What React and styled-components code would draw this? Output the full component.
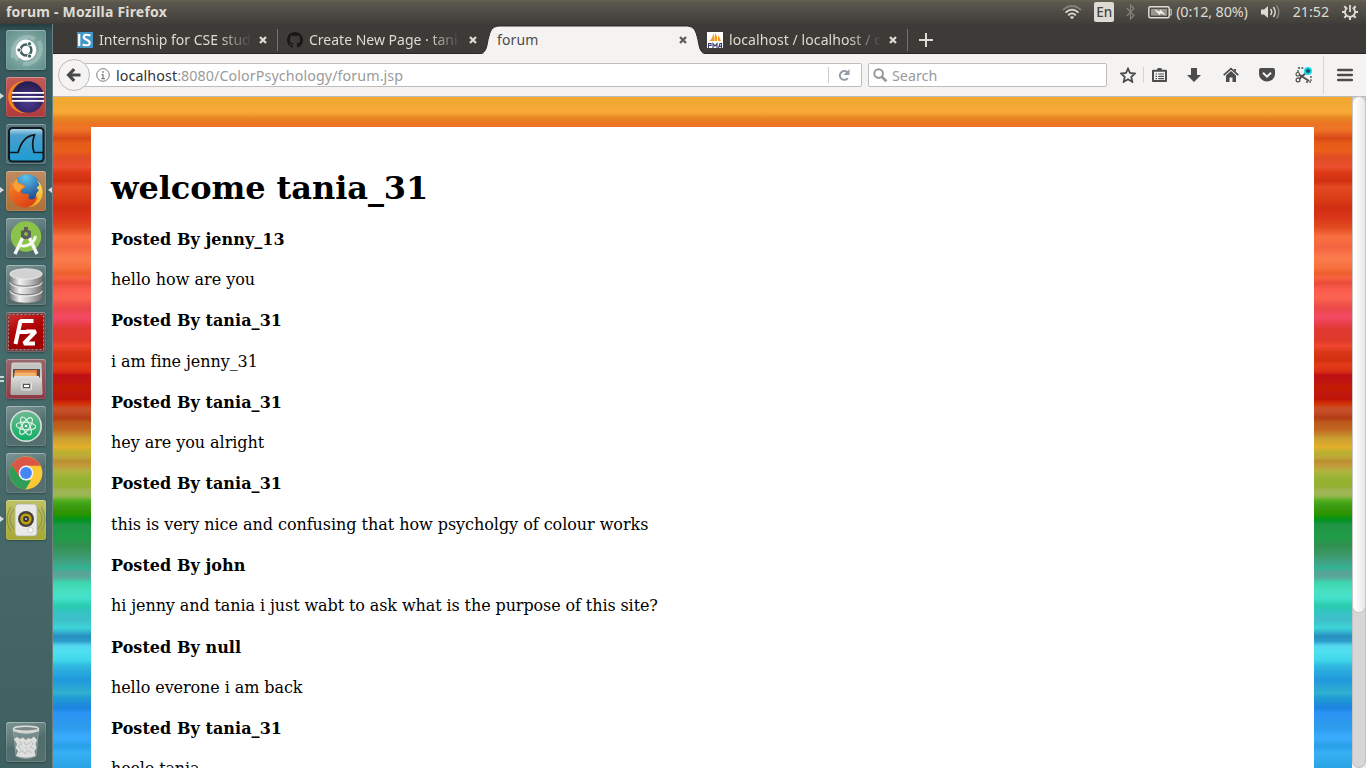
import React from 'react';
import styled, { createGlobalStyle } from 'styled-components';

const GlobalStyle = createGlobalStyle`
  * { box-sizing: border-box; }
  html, body { margin: 0; padding: 0; }
  body { width: 1366px; height: 768px; overflow: hidden; background: #3c3b37; }
  svg { display: block; flex: none; }
`;

const stripes = [
  [97, '#f0a830'], [104, '#f0a830'], [111, '#faaa38'], [114, '#f4a030'], [118, '#e58520'], [124, '#ec7424'], [130, '#ee7226'],
  [138, '#d84816'], [143, '#e45a18'], [150, '#ea6019'], [158, '#e04c24'], [167, '#ec5030'], [172, '#de3c18'],
  [181, '#d03010'], [187, '#e44822'], [197, '#dc4018'], [207, '#d02e12'], [217, '#da351a'], [227, '#e24a20'],
  [237, '#f87040'], [247, '#f46440'], [258, '#fa7c4c'], [268, '#f87040'], [273, '#ec602c'], [278, '#f86040'],
  [283, '#e84c38'], [289, '#fb5a4c'], [298, '#fb6450'], [308, '#ea4848'], [317, '#f44a64'], [323, '#ea4050'],
  [329, '#e03830'], [341, '#e03a2c'], [346, '#f04830'], [352, '#da3818'], [360, '#d23012'], [365, '#e23c18'],
  [372, '#da2c14'], [375, '#bc1014'], [382, '#c01410'], [388, '#c41c00'], [393, '#c01810'], [399, '#c01408'],
  [404, '#d43408'], [408, '#c85028'], [412, '#c44c28'], [418, '#b43c14'], [423, '#bc5c1c'], [429, '#c06420'],
  [438, '#c89c30'], [447, '#e4b02c'], [453, '#b8b030'], [457, '#c0a838'], [461, '#b89030'], [466, '#c49c3c'],
  [471, '#b0b440'], [480, '#94b430'], [486, '#94b030'], [491, '#a0b458'], [496, '#98b850'], [501, '#4cac1c'],
  [506, '#3c9c14'], [514, '#2c9400'], [520, '#009420'], [525, '#209444'], [538, '#209c48'], [545, '#309050'],
  [555, '#3c9868'], [563, '#40a488'], [568, '#30b490'], [572, '#58a498'], [577, '#58a898'], [583, '#3cd8b0'],
  [591, '#48e0c0'], [598, '#44e0cc'], [606, '#28ccac'], [611, '#34c4c0'], [620, '#40c0cc'], [628, '#3cd4d8'],
  [636, '#2890c0'], [641, '#2c9cc8'], [646, '#54d8f0'], [651, '#50e0f0'], [660, '#40d8ec'], [666, '#30b8e0'],
  [680, '#2098dc'], [693, '#30b0d0'], [698, '#209cd4'], [708, '#1c84e0'], [713, '#2c94f4'], [728, '#2c9cec'],
  [738, '#3cacff'], [746, '#28a0e8'], [753, '#38b0f4'], [768, '#28a4e4'],
];
const stripeCss = stripes.map(([y, c]) => `${c} ${y - 97}px`).join(', ');

const Screen = styled.div`
  width: 1366px;
  height: 768px;
  display: flex;
  flex-direction: column;
  overflow: hidden;
  font-family: 'Noto Sans', 'Open Sans', sans-serif;
  font-size: 14px;
  line-height: 20px;
`;

const Text = styled.span`
  white-space: pre;
  letter-spacing: ${(p) => p.$track || 0}px;
  font-size: ${(p) => p.$size || 14}px;
  font-weight: ${(p) => p.$weight || 400};
  color: ${(p) => p.$color || 'inherit'};
`;

const TopPanel = styled.header`
  flex: none;
  height: 24px;
  padding: 0 8px 0 6px;
  display: flex;
  align-items: center;
  justify-content: space-between;
  color: #dfdbd2;
  background: linear-gradient(#66634f 0, #5b584f 2px, #504e47 10px, #403f3a 23px, #3c3b37 24px);
`;

const Indicators = styled.div`
  display: flex;
  align-items: center;
  height: 24px;
`;

const Indicator = styled.div`
  display: flex;
  align-items: center;
  margin-left: ${(p) => p.$gap || 0}px;
`;

const LangBadge = styled.div`
  width: 20px;
  height: 20px;
  margin-left: 12px;
  border-radius: 2px;
  background: #dfdbd2;
  color: #454440;
  text-align: center;
  line-height: 20px;
`;

const Desktop = styled.div`
  flex: 1;
  min-height: 0;
  display: flex;
`;

const Launcher = styled.nav`
  flex: none;
  width: 53px;
  padding: 6px 0 6px;
  display: flex;
  flex-direction: column;
  gap: 7px;
  border-right: 1px solid #6d7f80;
  background: linear-gradient(#243c40 0, #35565b 8px, #3a5d61 100px, #466b6b 330px, #466869 520px, #3f6061 744px);
`;

const TileRow = styled.div`
  position: relative;
  height: 40px;
  padding-left: 6px;
  margin-top: ${(p) => (p.$last ? 'auto' : 0)};
`;

const Tile = styled.div`
  width: 40px;
  height: 40px;
  border-radius: 3px;
  background: ${(p) => p.$bg};
  box-shadow: inset 0 0 0 1px rgba(255, 255, 255, 0.13), inset 0 1px 0 rgba(255, 255, 255, 0.25), 0 1px 2px rgba(0, 0, 0, 0.3);
`;

const RunningMark = styled.i`
  position: absolute;
  top: 16px;
  border: 4px solid transparent;
  border-width: 3.5px 4px;
  ${(p) => (p.$side === 'right' ? 'right: 0; border-right-color: #d6dadb; border-left-width: 0;' : 'left: 0; border-left-color: #d6dadb; border-right-width: 0;')}
`;

const DoubleMark = styled.i`
  position: absolute;
  left: 0;
  top: 17px;
  width: 4px;
  height: 6px;
  border: solid #d0d4d5;
  border-width: 2px 0;
`;

const Browser = styled.main`
  flex: 1;
  min-width: 0;
  display: flex;
  flex-direction: column;
`;

const TabStrip = styled.div`
  flex: none;
  height: 30px;
  padding-left: 15px;
  display: flex;
  background: linear-gradient(#3c3b37 0 29px, #282724 29px);
`;

const Tab = styled.div`
  position: relative;
  width: 210px;
  height: 30px;
  padding: 2px 11px 0 9px;
  display: flex;
  align-items: center;
  gap: 6px;
  color: ${(p) => (p.$active ? '#4c4c4c' : '#dfdbd2')};
`;

const TabShape = styled.svg`
  position: absolute;
  left: -11px;
  top: 0;
`;

const TabLabel = styled.div`
  position: relative;
  flex: 1;
  min-width: 0;
  height: 20px;
  margin-right: ${(p) => (p.$fade ? 1 : 2)}px;
  ${(p) => p.$fade && 'mask-image: linear-gradient(90deg, #000 78%, transparent);'}
`;

const TabDivider = styled.i`
  width: 1px;
  height: 22px;
  margin: 5px 0 0 -1px;
  background: #74736d;
`;

const NewTab = styled.div`
  padding: 9px 0 0 11px;
`;

const Toolbar = styled.div`
  flex: none;
  height: 43px;
  display: flex;
  align-items: center;
  padding-left: 5px;
  background: #f4f3f2;
  border-bottom: 1px solid #bcbab8;
`;

const BackButton = styled.div`
  position: relative;
  z-index: 1;
  width: 32px;
  height: 32px;
  border-radius: 50%;
  border: 1px solid #bdbbb9;
  background: #f5f4f3;
  display: flex;
  align-items: center;
  justify-content: center;
`;

const Field = styled.div`
  height: 24px;
  width: ${(p) => p.$w}px;
  margin-left: ${(p) => p.$ml}px;
  padding-left: ${(p) => p.$pl}px;
  display: flex;
  align-items: center;
  background: #fff;
  border: 1px solid #bfbdbb;
  border-radius: 2px;
  color: #9a9a9a;
`;

const FieldText = styled.div`
  margin-left: ${(p) => p.$gap}px;
  padding-top: 2px;
  height: 22px;
`;

const Reload = styled.div`
  margin-left: auto;
  width: 33px;
  height: 16px;
  padding-left: 9px;
  border-left: 1px solid #cfcdcb;
`;

const Tools = styled.div`
  display: flex;
  align-items: center;
  margin-left: 13px;
`;

const ToolIcon = styled.div`
  width: ${(p) => p.$w || 36}px;
  height: ${(p) => p.$h || 16}px;
  display: flex;
  align-items: center;
  border-right: 1px solid ${(p) => (p.$rule ? '#d6d4d2' : 'transparent')};
`;

const Viewport = styled.div`
  flex: 1;
  min-height: 0;
  display: flex;
`;

const Page = styled.section`
  flex: 1;
  padding: 30px 38px 0;
  overflow: hidden;
  background: linear-gradient(${stripeCss});
`;

const Forum = styled.article`
  height: 900px;
  padding: 42px 20px 0;
  background: #fff;
  color: #000;
  font-family: 'DejaVu Serif', serif;
  font-size: 16px;
`;

const Welcome = styled.h1`
  margin: 0 0 22.8px;
  font-size: 32px;
  line-height: 38px;
  letter-spacing: -0.08px;
`;

const Author = styled.h4`
  margin: 0 0 21.3px;
  font-size: 16px;
  line-height: 19px;
  letter-spacing: 0.05px;
`;

const Message = styled.p`
  margin: 0 0 21.25px;
  line-height: 20px;
  letter-spacing: ${(p) => p.$track}px;
`;

const ScrollTrack = styled.div`
  flex: none;
  width: 14px;
  background: #d6d6d6;
  border: solid #c4c2c0;
  border-width: 0 1px 1px;
  border-radius: 0 0 7px 7px;
  box-shadow: 0 8px 0 #f2f1f0;
`;

const ScrollThumb = styled.div`
  height: 515px;
  border-radius: 7px;
  background: linear-gradient(90deg, #fdfdfd 20%, #e9e8e7);
  box-shadow: 0 0 0 1px #c8c6c4;
`;

const CloseMark = styled.svg`
  position: relative;
`;

const Close = ({ color }) => (
  <CloseMark width="8" height="8" viewBox="0 0 8 8">
    <path d="M1 1L7 7M7 1L1 7" stroke={color} strokeWidth="2.3" />
  </CloseMark>
);

const UbuntuIcon = () => (
  <svg width="40" height="40">
    <path d="M7 28C5 12 17 3 29 9M33 11C39 24 29 35 17 34M12 30C4 19 10 8 22 7" fill="none" stroke="#c8dedb" strokeOpacity=".35" strokeWidth="4" />
    <circle cx="20" cy="20" r="10.4" fill="#fff" />
    <circle cx="20" cy="20" r="5.4" fill="none" stroke="#42635d" strokeWidth="2.5" />
    <g fill="#42635d" stroke="#fff" strokeWidth=".9">
      <circle cx="13" cy="20" r="2.1" /><circle cx="23.5" cy="13.9" r="2.1" /><circle cx="23.5" cy="26.1" r="2.1" />
    </g>
  </svg>
);

const EclipseIcon = () => (
  <svg width="40" height="40">
    <defs>
      <radialGradient id="ecl" cx=".5" cy=".65" r=".6"><stop offset="0" stopColor="#4c3a94" /><stop offset="1" stopColor="#271e50" /></radialGradient>
    </defs>
    <circle cx="18.2" cy="20" r="16" fill="#f78a18" />
    <circle cx="21" cy="20" r="15.9" fill="#c8503c" />
    <circle cx="22" cy="20" r="15.8" fill="url(#ecl)" />
    <path d="M6 15.8h32M6 19.8h32M6 23.8h32" stroke="#fff" strokeWidth="1.8" />
  </svg>
);

const WiresharkIcon = () => (
  <svg width="40" height="40">
    <defs><linearGradient id="ws" x2="0" y2="1"><stop offset="0" stopColor="#b8dcec" /><stop offset=".22" stopColor="#4a9fcc" /><stop offset="1" stopColor="#1c9bd4" /></linearGradient></defs>
    <rect x="3" y="4" width="34.5" height="33.5" rx="3.5" fill="url(#ws)" stroke="#14191c" strokeWidth="2" />
    <path d="M3 28.5H12C15 18 20 11.5 28.5 10.8C26.2 17 26.2 23 28 28.5H37" fill="none" stroke="#10171a" strokeWidth="1.7" />
  </svg>
);

const FirefoxIcon = () => (
  <svg width="40" height="40">
    <defs>
      <radialGradient id="ffb" cx=".45" cy=".1" r=".9"><stop offset="0" stopColor="#5cc4ea" /><stop offset="1" stopColor="#153a8c" /></radialGradient>
      <linearGradient id="ffo" x2=".6" y2="1"><stop offset="0" stopColor="#f7962a" /><stop offset=".5" stopColor="#ec641e" /><stop offset="1" stopColor="#dc4416" /></linearGradient>
      <linearGradient id="ffy" x2="0" y2="1"><stop offset="0" stopColor="#fbe96a" /><stop offset="1" stopColor="#f6a01c" /></linearGradient>
    </defs>
    <circle cx="21" cy="17.5" r="14.2" fill="url(#ffb)" />
    <path d="M31 9C37 14 38.5 24 34 30C31 34 27 36 22 36C27 32 30 28 30.5 22L33 19L30.5 17L33.5 14Z" fill="url(#ffy)" />
    <path d="M5 10L7 13L10.5 7.5L12 12C15 11.5 17 13 19.5 16L15 19C14.5 22 17 23.5 20 22.6L23.5 24C20 28 26 31 31.5 25C30.5 32 25 36.8 18.5 36.4C8 35.8 1.5 26 4.2 17Z" fill="url(#ffo)" />
    <path d="M7 13L10.5 7.5L12 12L19 15.5L14.5 18.5L13 21.5L8 18Z" fill="#f7a136" />
  </svg>
);

const AndroidStudioIcon = () => (
  <svg width="40" height="40">
    <circle cx="20" cy="18.5" r="15.2" fill="#8bc34a" />
    <path d="M12 26.5C18 30 28 27 29.5 18" fill="none" stroke="#f4f6f2" strokeWidth="3" />
    <path d="M17.5 18L9 36M22.5 18L31 36" stroke="#f5f5f5" strokeWidth="3.4" />
    <path d="M18 9h4v3l3 1v6l-3 2h-4l-3-2v-6l3-1z" fill="#5b5b5e" />
    <circle cx="20" cy="16" r="1.9" fill="#8bbd4a" />
  </svg>
);

const DatabaseIcon = () => (
  <svg width="40" height="40">
    <defs><linearGradient id="db"><stop offset="0" stopColor="#777" /><stop offset=".3" stopColor="#f2f2f2" /><stop offset=".6" stopColor="#c4c4c4" /><stop offset="1" stopColor="#707070" /></linearGradient></defs>
    {[26, 17.5, 9].map((y) => (
      <g key={y}>
        <path d={`M3.8 ${y}v6.5c0 7.5 32.4 7.5 32.4 0V${y}z`} fill="url(#db)" />
        <path d={`M3.8 ${y + 6.5}c0 7.5 32.4 7.5 32.4 0`} fill="none" stroke="#666" strokeWidth=".8" />
        <ellipse cx="20" cy={y} rx="16.2" ry="5.2" fill="#d2d2d2" stroke="#f0f0f0" strokeWidth=".8" />
      </g>
    ))}
  </svg>
);

const FileZillaIcon = () => (
  <svg width="40" height="40">
    <defs><linearGradient id="fz" x2=".4" y2="1"><stop offset="0" stopColor="#cf3030" /><stop offset=".5" stopColor="#b00505" /><stop offset="1" stopColor="#9c0000" /></linearGradient></defs>
    <rect x="2.5" y="2.5" width="35" height="35" fill="url(#fz)" stroke="#6b3438" />
    <rect x="2.5" y="2.5" width="35" height="35" fill="none" stroke="#b98a8c" strokeDasharray="2 2" />
    <path d="M9.5 32L14.5 9H27.5M12 20H22M20 19.5H29.5L18 31.5H29" fill="none" stroke="#fff" strokeWidth="4" strokeLinejoin="bevel" />
  </svg>
);

const FilesIcon = () => (
  <svg width="40" height="40">
    <defs><linearGradient id="fi" x2="0" y2="1"><stop offset="0" stopColor="#dededc" /><stop offset="1" stopColor="#a8a8a4" /></linearGradient></defs>
    <path d="M6 5Q6 4 7 4H34Q35 4 35 5L36 35H5Z" fill="#c4c4c2" stroke="#e4e4e4" strokeWidth=".8" />
    <rect x="7" y="10" width="27" height="9" fill="#55504b" />
    <path d="M9 11H31V18H8Z" fill="#e2803d" /><path d="M9 13.5H29L31 18H8Z" fill="#f0b46c" />
    <path d="M5 18.5H8V17H33V18.5H36V36H5Z" fill="url(#fi)" />
    <rect x="15.5" y="23" width="10" height="8" rx="1" fill="#bdbdbb" stroke="#e6e6e6" />
    <rect x="17.5" y="25.5" width="6" height="3" fill="#fff" stroke="#555" />
  </svg>
);

const AtomIcon = () => (
  <svg width="40" height="40">
    <defs><linearGradient id="at" x2="0" y2="1"><stop offset="0" stopColor="#6cba91" /><stop offset="1" stopColor="#0fae62" /></linearGradient></defs>
    <circle cx="20" cy="20" r="15.2" fill="url(#at)" stroke="#d5ddd9" strokeWidth="1.7" />
    <g fill="none" stroke="#e6f2ec" strokeWidth="1.1">
      <ellipse cx="20" cy="20" rx="9.8" ry="3.8" transform="rotate(5 20 20)" />
      <ellipse cx="20" cy="20" rx="9.8" ry="3.8" transform="rotate(65 20 20)" />
      <ellipse cx="20" cy="20" rx="9.8" ry="3.8" transform="rotate(125 20 20)" />
    </g>
    <circle cx="20" cy="20" r="1.3" fill="#fff" />
  </svg>
);

const ChromeIcon = () => (
  <svg width="40" height="40">
    <circle cx="20" cy="20" r="16.4" fill="#fcc934" />
    <path d="M5.8 11.8L13.7 23.6L20 27.3H25L19.5 36.4A16.4 16.4 0 0 1 5.8 11.8Z" fill="#2f9d58" />
    <path d="M5.8 11.8A16.4 16.4 0 0 1 34.6 12.7H20L12.7 23Z" fill="#dc5645" />
    <circle cx="20" cy="20" r="7.4" fill="#f3f3f3" /><circle cx="20" cy="20" r="5.9" fill="#4486f4" />
  </svg>
);

const SpeakerIcon = () => (
  <svg width="40" height="40">
    <g fill="none" stroke="#7b8a55" strokeOpacity=".7" strokeWidth="1.2">
      <path d="M8 9Q0 19 8 29M32 9Q40 19 32 29M5 7Q-3 19 5 31M35 7Q43 19 35 31" />
    </g>
    <path d="M13 4H27Q31 4 31 9V32Q31 36 28 36H12Q9 36 9 32V9Q9 4 13 4Z" fill="#e9e9e7" stroke="#aaa" strokeWidth=".7" />
    <circle cx="20" cy="19" r="8" fill="#454440" /><circle cx="20" cy="19" r="5.6" fill="#c5a20b" />
    <circle cx="20" cy="19" r="3" fill="#35383a" /><circle cx="20" cy="19" r="1" fill="#ccc" />
    <circle cx="24.5" cy="30" r="2.6" fill="#f8f8f8" stroke="#c2c2c2" strokeWidth=".8" />
  </svg>
);

const TrashIcon = () => (
  <svg width="40" height="40">
    <path d="M7.5 9L10 34Q20 39 30 34L32.5 9Z" fill="#8fa0a0" fillOpacity=".5" stroke="#a8b4b4" strokeWidth=".6" />
    <path d="M8 17L11 15L14 17L17 15.5L20 18L22 16L25 17L28 14.5L31 18L29.5 22L30.5 26L28.5 29L29.5 34Q20 37.5 10 34L12 29L9.5 26L11 22Z" fill="#dededc" />
    <path d="M13 19l3 3-4 2 3 3M18 20l2 3 4-2M25 19l2 3-3 3 4 2M13 31l3-3 3 4 3-4 4 3M19 25l2 2" fill="none" stroke="#b4b8b7" strokeWidth=".9" />
    <ellipse cx="20" cy="6.8" rx="12.6" ry="2.6" fill="#7c8886" stroke="#dededc" strokeWidth="1.6" />
    <path d="M7 8Q20 13.5 33 8" fill="none" stroke="#d4d4d2" strokeWidth="2" />
  </svg>
);

const glass = 'linear-gradient(160deg, #7d9595 0, #5a7576 45%, #506c6d 50%, #57706f 100%)';
const tiles = [
  { Icon: UbuntuIcon, bg: 'radial-gradient(#9bbcb8, #5c8c86)' },
  { Icon: EclipseIcon, bg: 'linear-gradient(#c45b55, #ae3a3c)', mark: true },
  { Icon: WiresharkIcon, bg: 'linear-gradient(#55737a, #4d7078)' },
  { Icon: FirefoxIcon, bg: 'linear-gradient(#bd8c60, #ae6f38)', mark: true, focused: true },
  { Icon: AndroidStudioIcon, bg: glass },
  { Icon: DatabaseIcon, bg: glass },
  { Icon: FileZillaIcon, bg: '#6b4a4e' },
  { Icon: FilesIcon, bg: 'linear-gradient(#98686c, #8d3a45)', double: true },
  { Icon: AtomIcon, bg: glass },
  { Icon: ChromeIcon, bg: glass },
  { Icon: SpeakerIcon, bg: 'linear-gradient(#bfc262, #a6a833)', mark: true },
];

const InternshalaIcon = () => (
  <svg width="16" height="16">
    <rect width="16" height="16" fill="#4496c6" />
    <path d="M2.2 2V14" stroke="#fff" strokeWidth="2.2" />
    <path d="M13.5 3.6Q7 1.5 6.7 5C6.6 8 13 7.5 12.8 11C12.5 14 8 13.5 5.6 12.5" fill="none" stroke="#fff" strokeWidth="2.1" />
  </svg>
);

const GithubIcon = () => (
  <svg width="16" height="16" viewBox="0 0 16 16">
    <path fill="#191717" d="M8 0C3.58 0 0 3.58 0 8c0 3.54 2.29 6.53 5.47 7.59.4.07.55-.17.55-.38 0-.19-.01-.82-.01-1.49-2.01.37-2.53-.49-2.69-.94-.09-.23-.48-.94-.82-1.13-.28-.15-.68-.52-.01-.53.63-.01 1.08.58 1.23.82.72 1.21 1.87.87 2.33.66.07-.52.28-.87.51-1.07-1.78-.2-3.64-.89-3.64-3.95 0-.87.31-1.59.82-2.15-.08-.2-.36-1.02.08-2.12 0 0 .67-.21 2.2.82.64-.18 1.32-.27 2-.27s1.36.09 2 .27c1.53-1.04 2.2-.82 2.2-.82.44 1.1.16 1.92.08 2.12.51.56.82 1.27.82 2.15 0 3.07-1.87 3.75-3.65 3.95.29.25.54.73.54 1.48 0 1.07-.01 1.93-.01 2.2 0 .21.15.46.55.38A8.01 8.01 0 0 0 16 8c0-4.42-3.58-8-8-8z" />
  </svg>
);

const PmaIcon = () => (
  <svg width="16" height="16">
    <rect width="16" height="16" fill="#fff" />
    <path d="M2 9Q6 7 6 1Q8 5 7 9ZM8 1Q11 5 10 9H7.5ZM11 3Q13 6 14 9H11Z" fill="#f7991c" />
    <path d="M1.5 16V11.5H4V13.5H1.5M6 16V11.5L8 14L10 11.5V16M11.5 16L13 11.5H14.5V16M12 14.4H14.5" fill="none" stroke="#383b70" strokeWidth="1.1" />
  </svg>
);

const BackArrow = () => (
  <svg width="16" height="16"><path d="M8.2 2.2L2.6 8L8.2 13.8M3 8H14.5" fill="none" stroke="#4a4a4a" strokeWidth="3.2" /></svg>
);

const InfoIcon = () => (
  <svg width="14" height="14"><circle cx="7" cy="7" r="6.3" fill="none" stroke="#7b7b7b" /><path d="M7 3v2M7 6v5M5.5 6.5H7M5.3 10.7h3.6" stroke="#777" strokeWidth="1.2" /></svg>
);

const ReloadIcon = () => (
  <svg width="12" height="14" viewBox="0 0 12 14"><path d="M9.8 11.1A4.4 4.4 0 1 1 9 5" fill="none" stroke="#909ca8" strokeWidth="2" /><path d="M11.5 2V8H5.5Z" fill="#909ca8" /></svg>
);

const SearchIcon = () => (
  <svg width="15" height="15"><circle cx="5.6" cy="5.6" r="4.3" fill="none" stroke="#979797" strokeWidth="2" /><path d="M8.7 8.7L13.4 13.3" stroke="#979797" strokeWidth="2.7" /></svg>
);

const ink = '#4c4c4c';
const StarIcon = () => (
  <svg width="16" height="16"><path d="M8 1.6L10 6L15 6.5L11.3 9.9L12.3 14.8L8 12.2L3.7 14.8L4.7 9.9L1 6.5L6 6Z" fill="none" stroke={ink} strokeWidth="1.8" /></svg>
);
const ListIcon = () => (
  <svg width="15" height="16"><path d="M1 3.8H14V14H1Z" fill="none" stroke={ink} strokeWidth="2" strokeLinejoin="round" /><path d="M4 4L6 1H9L11 4Z" fill={ink} /><path d="M3.5 7H5M6.3 7H12M3.5 9.3H5M6.3 9.3H12M3.5 11.6H5M6.3 11.6H12" stroke={ink} strokeWidth="1.2" /></svg>
);
const DownloadIcon = () => (
  <svg width="14" height="16"><path d="M4 1H10V8H14L7 15L0 8H4Z" fill={ink} /></svg>
);
const HomeIcon = () => (
  <svg width="16" height="16"><path d="M.7 8.2L8 1.6L15.3 8.2" fill="none" stroke={ink} strokeWidth="1.7" /><path d="M11 2H13V5L11 3ZM3 8.5L8 4L13 8.5V15H9.5V10.5H6.5V15H3Z" fill={ink} /></svg>
);
const PocketIcon = () => (
  <svg width="16" height="16"><path d="M0 3Q0 1 2 1H14Q16 1 16 3V7A8 7.5 0 0 1 0 7Z" fill={ink} /><path d="M4 5.8L8 9.6L12 5.8" fill="none" stroke="#f4f3f2" strokeWidth="2" /></svg>
);
const ScissorsIcon = () => (
  <svg width="17" height="16">
    <path d="M3 1H9M3 3V6M16 9V14M11 15H16" stroke={ink} strokeDasharray="2 1.3" strokeWidth="1.3" />
    <path d="M4 7.5L14 14M4 12L12 5" stroke={ink} strokeWidth="1.8" />
    <circle cx="2.8" cy="7.3" r="1.8" fill="none" stroke={ink} strokeWidth="1.2" /><circle cx="3" cy="13" r="1.9" fill="none" stroke={ink} strokeWidth="1.2" />
    <circle cx="13" cy="4" r="4" fill="#17e3f2" /><path d="M13 1.4V6.6M10.7 2.7L15.3 5.3M15.3 2.7L10.7 5.3" stroke="#125363" strokeWidth="1.3" />
  </svg>
);
const MenuIcon = () => (
  <svg width="16" height="16"><path d="M1.2 3H14.8M1.2 8H14.8M1.2 13H14.8" stroke={ink} strokeWidth="2.6" strokeLinecap="round" /></svg>
);

const WifiIcon = () => (
  <svg width="20" height="15" fill="none" strokeWidth="1.7">
    <path d="M1 5Q10 -3 19 5" stroke="#85827a" /><path d="M3.5 7.7Q10 1.5 16.5 7.7M6.2 10.3Q10 6.5 13.8 10.3" stroke="#dfdbd2" /><path d="M7.8 12L10 14.2L12.2 12Q10 10.4 7.8 12Z" fill="#dfdbd2" />
  </svg>
);
const BluetoothIcon = () => (
  <svg width="9" height="16"><path d="M.8 4L8 11.5L4.5 15V1L8 4.5L.8 12" fill="none" stroke="#85827a" strokeWidth="1.2" /></svg>
);
const BatteryIcon = () => (
  <svg width="24" height="13"><rect x=".8" y=".8" width="20.4" height="11" rx="1.5" fill="none" stroke="#dfdbd2" strokeWidth="1.5" /><rect x="3" y="3" width="16" height="6.6" fill="#99968e" /><path d="M22 3.5h1.2v5.5H22" fill="none" stroke="#dfdbd2" /><path d="M6 3.2L11.5 5.6L12.5 3.5L18 9.5L12.7 7.3L11.7 9.3Z" fill="#f2efe9" /></svg>
);
const VolumeIcon = () => (
  <svg width="20" height="16"><path d="M0 5.5H3L7 2V14L3 10.5H0Z" fill="#dfdbd2" /><g fill="none" strokeWidth="1.4"><path d="M9.5 5Q12 8 9.5 11M12.4 3Q16 8 12.4 13" stroke="#dfdbd2" /><path d="M15.6 1.3Q20 8 15.6 14.7" stroke="#89867e" /></g></svg>
);
const PowerIcon = () => (
  <svg width="16" height="16" fill="none" stroke="#dfdbd2">
    <path d="M5.3 3.7A5 5 0 1 0 10.7 3.7" strokeWidth="1.8" /><path d="M8 1V8" strokeWidth="1.8" />
    <path d="M13 8H16M0 8H3M8 13V16M11.7 11.7L13.7 13.7M2.3 13.7L4.3 11.7M2.3 2.3L4.3 4.3M13.7 2.3L11.7 4.3" strokeWidth="2" />
  </svg>
);

const posts = [
  ['jenny_13', 'hello how are you', 0],
  ['tania_31', 'i am fine jenny_31', -0.09],
  ['tania_31', 'hey are you alright', -0.05],
  ['tania_31', 'this is very nice and confusing that how psycholgy of colour works', -0.045],
  ['john', 'hi jenny and tania i just wabt to ask what is the purpose of this site?', -0.1],
  ['null', 'hello everone i am back', -0.08],
  ['tania_31', 'heelo tania', -0.15],
];

const tabs = [
  { icon: <InternshalaIcon />, label: 'Internship for CSE stud', track: 0, divider: true },
  { icon: <GithubIcon />, label: 'Create New Page · tani', track: 0 },
  { label: 'forum', active: true, track: 0.15 },
  { icon: <PmaIcon />, label: 'localhost / localhost / c', track: 0.08, divider: true },
];

export default function App() {
  return (
    <Screen>
      <GlobalStyle />
      <TopPanel>
        <Text $weight={700} $size={14} $track={0.2}>forum - Mozilla Firefox</Text>
        <Indicators>
          <Indicator><WifiIcon /></Indicator>
          <LangBadge><Text $size={13.5} $weight={500}>En</Text></LangBadge>
          <Indicator $gap={12}><BluetoothIcon /></Indicator>
          <Indicator $gap={13}><BatteryIcon /></Indicator>
          <Indicator $gap={4}><Text $size={14.4} $track={-0.15}>(0:12, 80%)</Text></Indicator>
          <Indicator $gap={13}><VolumeIcon /></Indicator>
          <Indicator $gap={12}><Text $size={14.2}>21:52</Text></Indicator>
          <Indicator $gap={13}><PowerIcon /></Indicator>
        </Indicators>
      </TopPanel>
      <Desktop>
        <Launcher>
          {tiles.map(({ Icon, bg, mark, focused, double }, i) => (
            <TileRow key={i}>
              {mark && <RunningMark />}
              {double && <DoubleMark />}
              <Tile $bg={bg}><Icon /></Tile>
              {focused && <RunningMark $side="right" />}
            </TileRow>
          ))}
          <TileRow $last><Tile $bg={glass}><TrashIcon /></Tile></TileRow>
        </Launcher>
        <Browser>
          <TabStrip>
            {tabs.map((t) => (
              <React.Fragment key={t.label}>
                <Tab $active={t.active}>
                  {t.active && (
                    <TabShape width="232" height="30">
                      <path d="M0 30C11 30 9 22 12 12C14 4 17 2 24 2H208C215 2 218 4 220 12C223 22 221 30 232 30Z" fill="#f4f3f2" stroke="#2b2a27" strokeWidth="1" />
                      <path d="M8 29H224L230 31H2Z" fill="#f4f3f2" />
                    </TabShape>
                  )}
                  {t.icon}
                  <TabLabel $fade={!t.active}><Text $track={t.track}>{t.label}</Text></TabLabel>
                  <Close color={t.active ? '#5c5c5c' : '#dfdbd2'} />
                </Tab>
                {t.divider && <TabDivider />}
              </React.Fragment>
            ))}
            <NewTab><svg width="14" height="14"><path d="M7 0V14M0 7H14" stroke="#dfdbd2" strokeWidth="2" /></svg></NewTab>
          </TabStrip>
          <Toolbar>
            <BackButton><BackArrow /></BackButton>
            <Field $w={778} $ml={-6} $pl={11}>
              <InfoIcon />
              <FieldText $gap={6}><Text $size={14.3} $track={0.08} $color="#333">localhost</Text><Text $size={14.3} $track={0.08}>:8080/ColorPsychology/forum.jsp</Text></FieldText>
              <Reload><ReloadIcon /></Reload>
            </Field>
            <Field $w={239} $ml={6} $pl={4}>
              <SearchIcon />
              <FieldText $gap={4}><Text $size={14.3}>Search</Text></FieldText>
            </Field>
            <Tools>
              <ToolIcon $w={24} $rule><StarIcon /></ToolIcon>
              <ToolIcon $w={43}><Indicator $gap={8}><ListIcon /></Indicator></ToolIcon>
              <ToolIcon><DownloadIcon /></ToolIcon>
              <ToolIcon><HomeIcon /></ToolIcon>
              <ToolIcon><PocketIcon /></ToolIcon>
              <ToolIcon $w={29} $h={38} $rule><ScissorsIcon /></ToolIcon>
              <Indicator $gap={13}><MenuIcon /></Indicator>
            </Tools>
          </Toolbar>
          <Viewport>
            <Page>
              <Forum>
                <Welcome>welcome tania_31</Welcome>
                {posts.map(([who, text, track], i) => (
                  <React.Fragment key={i}>
                    <Author>Posted By {who}</Author>
                    <Message $track={track}>{text}</Message>
                  </React.Fragment>
                ))}
              </Forum>
            </Page>
            <ScrollTrack><ScrollThumb /></ScrollTrack>
          </Viewport>
        </Browser>
      </Desktop>
    </Screen>
  );
}
